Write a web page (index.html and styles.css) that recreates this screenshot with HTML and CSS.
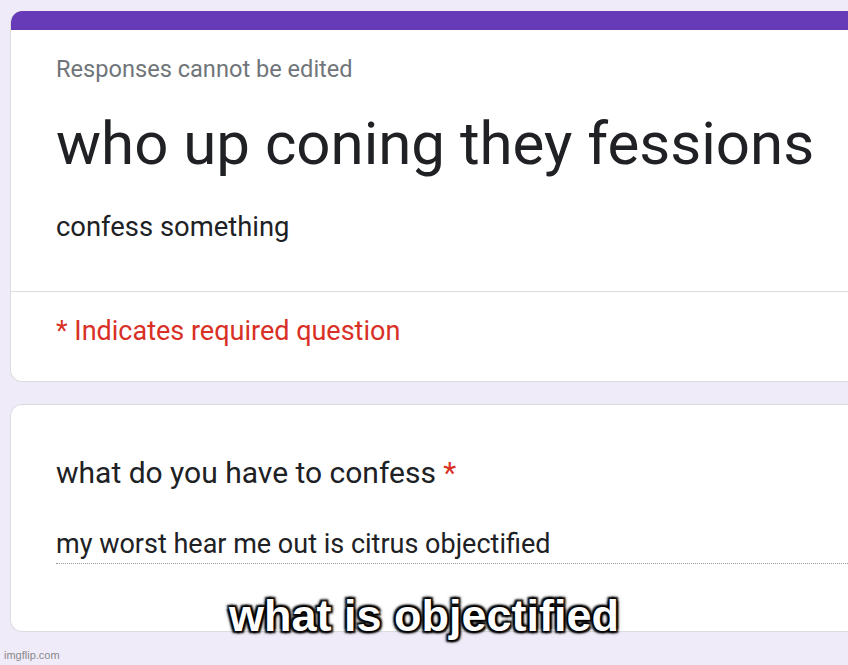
FILE: index.html
```html
<!DOCTYPE html>
<html>
<head>
<meta charset="utf-8">
<link rel="stylesheet" href="styles.css">
</head>
<body>
<div class="page">
  <div class="card header-card">
    <div class="accent"></div>
    <div class="header-body">
      <div class="note">Responses cannot be edited</div>
      <h1 class="title">who up coning they fessions</h1>
      <div class="desc">confess something</div>
    </div>
    <div class="divider"></div>
    <div class="required">* Indicates required question</div>
  </div>
  <div class="card question-card">
    <div class="question">what do you have to confess <span class="star">*</span></div>
    <div class="answer">my worst hear me out is citrus objectified</div>
  </div>
</div>
<div class="caption">what is objectified</div>
<div class="watermark">imgflip.com</div>
</body>
</html>
```
FILE: styles.css
```css
html, body {
  margin: 0;
  padding: 0;
}
body {
  width: 848px;
  height: 665px;
  overflow: hidden;
  background: #f0ebf8;
  font-family: Roboto, "Liberation Sans", sans-serif;
  position: relative;
}
.page {
  padding: 11px 0 0 10px;
  display: flex;
  flex-direction: column;
  gap: 22px;
}
.card {
  background: #fff;
  border: 1px solid #dadce0;
  border-right: none;
  border-radius: 12px 0 0 12px;
  width: 860px;
  box-sizing: border-box;
  overflow: hidden;
}
.header-card {
  height: 371px;
  border-top: none;
}
.accent {
  height: 19px;
  background: #673ab7;
}
.header-body {
  padding: 0 0 0 45px;
}
.note {
  font-size: 23.6px;
  color: #70757a;
  line-height: 28px;
  padding-top: 25px;
}
.title {
  margin: 0;
  font-weight: 400;
  font-size: 60px;
  line-height: 70px;
  color: #202124;
  padding-top: 26px;
}
.desc {
  font-size: 27.4px;
  line-height: 32px;
  color: #202124;
  padding-top: 32px;
  padding-bottom: 48px;
}
.divider {
  height: 1px;
  background: #dadce0;
}
.required {
  padding: 23px 0 0 45px;
  font-size: 27px;
  color: #d93025;
  line-height: 32px;
}
.question-card {
  height: 228px;
  padding: 50px 0 0 45px;
}
.question {
  font-size: 30px;
  line-height: 36px;
  color: #202124;
}
.star {
  color: #d93025;
}
.answer {
  margin-top: 37px;
  font-size: 27px;
  line-height: 32px;
  color: #202124;
  border-bottom: 1px dotted #9a9a9a;
  padding-bottom: 3px;
}
.caption {
  position: absolute;
  left: 0;
  right: 0;
  top: 590px;
  text-align: center;
  font-family: "Liberation Sans", Arial, sans-serif;
  font-weight: 700;
  font-size: 45px;
  line-height: 52px;
  color: #fff;
  text-shadow: 0 0 2px #000, 2px 2px 2px #000, -2px -2px 2px #000, 2px -2px 2px #000, -2px 2px 2px #000, 0 0 5px #000;
}
.watermark {
  position: absolute;
  left: 4px;
  top: 649px;
  font-family: "Liberation Sans", Arial, sans-serif;
  font-size: 11px;
  color: #8a8a8a;
}
```
